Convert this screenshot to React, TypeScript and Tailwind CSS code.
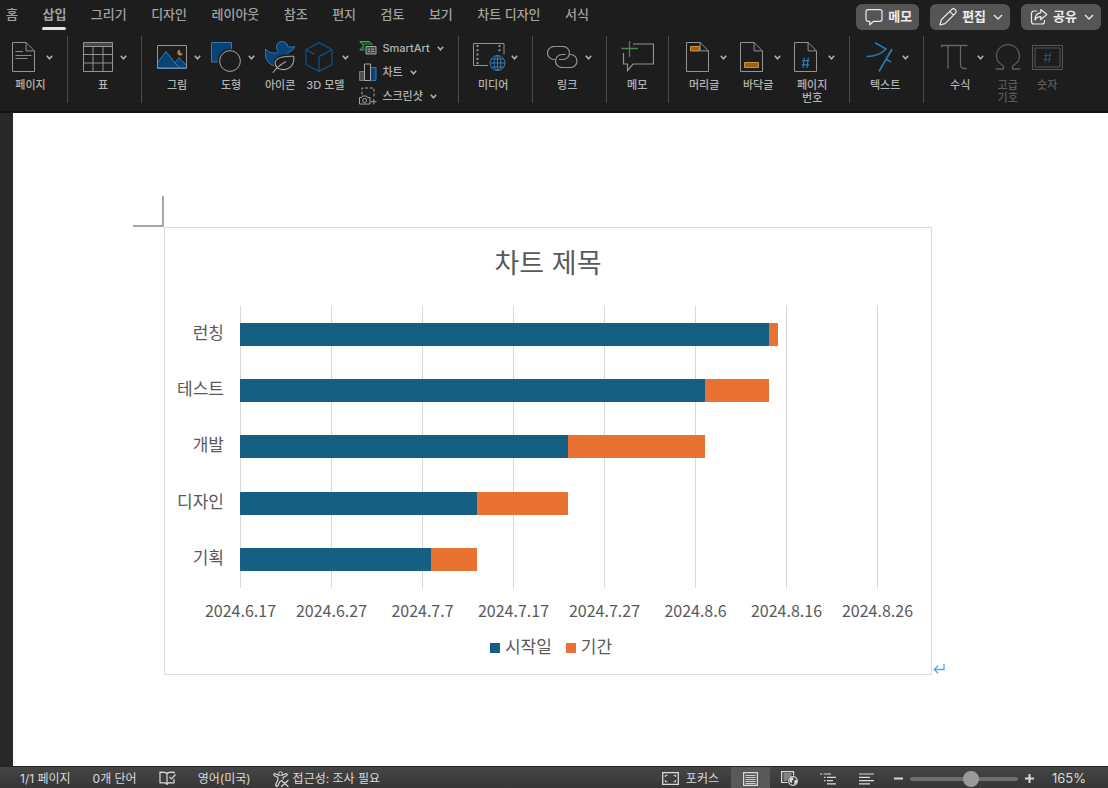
import React, { useState } from "react";
import type { ReactNode } from "react";

const TABS = ["홈", "삽입", "그리기", "디자인", "레이아웃", "참조", "편지", "검토", "보기", "차트 디자인", "서식"];

const TOTAL_DAYS = 70;
const TASKS = [
  { name: "런칭", start: 58, length: 1 },
  { name: "테스트", start: 51, length: 7 },
  { name: "개발", start: 36, length: 15 },
  { name: "디자인", start: 26, length: 10 },
  { name: "기획", start: 21, length: 5 },
];
const TICKS = ["2024.6.17", "2024.6.27", "2024.7.7", "2024.7.17", "2024.7.27", "2024.8.6", "2024.8.16", "2024.8.26"];

function Svg({ w, h, children, className = "" }: { w: number; h: number; children: ReactNode; className?: string }) {
  return (
    <svg width={w} height={h} viewBox={`0 0 ${w} ${h}`} fill="none" stroke="currentColor" aria-hidden="true" className={`shrink-0 ${className}`}>
      {children}
    </svg>
  );
}

function Caret({ className = "" }: { className?: string }) {
  return (
    <Svg w={7} h={5} className={className}>
      <path d="M0.8 0.8 3.5 3.8 6.2 0.8" strokeWidth="1.5" />
    </Svg>
  );
}

function Sheet({ children }: { children: ReactNode }) {
  return (
    <Svg w={23} h={30} className="text-[#949494]">
      <path d="M.5.5h13.6l8.4 8.4v20.6H.5zM14.1.5v8.4h8.4" />
      {children}
    </Svg>
  );
}

function Tool({ icon, label, caret = true, disabled = false, gap = "gap-[7px]" }: { icon: ReactNode; label: ReactNode; caret?: boolean; disabled?: boolean; gap?: string }) {
  return (
    <button type="button" disabled={disabled} className={`flex shrink-0 flex-col items-center gap-[7px] pt-[6px] ${disabled ? "text-[#5c5c5c]" : "text-[#b4b4b4]"}`}>
      <span className={`flex h-[30px] items-center ${gap}`}>
        {icon}
        {caret && <Caret />}
      </span>
      <span className={`text-center text-[11px] leading-[13px] font-medium whitespace-nowrap ${caret ? "pr-1" : ""}`}>{label}</span>
    </button>
  );
}

function SmallTool({ icon, label }: { icon: ReactNode; label: string }) {
  return (
    <button type="button" className="flex h-6 items-center text-[11px] font-medium whitespace-nowrap text-[#b4b4b4]">
      {icon}
      <span className="pr-[7px] pl-[5px]">{label}</span>
      <Caret />
    </button>
  );
}

function Separator() {
  return <div className="h-[67px] w-px shrink-0 bg-[#4a4a4a]" />;
}

function Pill({ icon, label, caret = true }: { icon: ReactNode; label: string; caret?: boolean }) {
  return (
    <button type="button" className="flex h-[26px] items-center rounded-md bg-[#555555] pr-[7px] pl-[9px] text-[13px] font-bold whitespace-nowrap text-[#ececec]">
      {icon}
      <span className="pl-[5px]">{label}</span>
      {caret && (
        <Svg w={10} h={6} className="ml-[7px]">
          <path d="m1 1 4 4 4-4" strokeWidth="1.3" />
        </Svg>
      )}
    </button>
  );
}

function Header() {
  const [active, setActive] = useState("삽입");
  return (
    <header className="border-b-2 border-[#111111] bg-[#1d1d1d]">
      <div className="flex items-start justify-between pr-[7px] pl-[6px]">
        <nav className="flex w-[583px] justify-between pt-1 text-[13px] leading-5 font-medium text-[#a2a2a2]">
          {TABS.map((t) => (
            <button key={t} type="button" onClick={() => setActive(t)} className={`flex flex-col gap-[3px] whitespace-nowrap ${t === active ? "font-bold" : ""}`}>
              {t}
              <span className={`h-[3px] w-full rounded-full ${t === active ? "bg-[#e2e2e2]" : ""}`} />
            </button>
          ))}
        </nav>
        <div className="flex gap-[11px] pt-1 pb-[3px]">
          <Pill
            caret={false}
            label="메모"
            icon={
              <Svg w={18} h={18}>
                <path d="M3 1.7h12a2 2 0 0 1 2 2v7.6a2 2 0 0 1-2 2H8.6L4.8 16.8v-3.5H3a2 2 0 0 1-2-2V3.700a2 2 0 0 1 2-2z" strokeWidth="1.2" strokeLinejoin="round" />
              </Svg>
            }
          />
          <Pill
            label="편집"
            icon={
              <Svg w={18} h={18}>
                <path d="M1 17l1.300-5.200L12.600 1.600a2.400 2.400 0 0 1 3.700 3.700L6 15.600zM10.800 3.400l3.700 3.700" strokeWidth="1.2" strokeLinejoin="round" />
              </Svg>
            }
          />
          <Pill
            label="공유"
            icon={
              <Svg w={18} h={18}>
                <path d="M7 3H4a2.500 2.500 0 0 0-2.500 2.500v8A2.500 2.500 0 0 0 4 16h8a2.500 2.500 0 0 0 2.500-2.500V12" strokeWidth="1.2" />
                <path d="M10.800 1.500 16.800 6.500l-6 5V8.600C8 8.600 6.300 9.500 5 12c.2-4.500 2.500-7 5.800-7.400z" strokeWidth="1.2" strokeLinejoin="round" />
              </Svg>
            }
          />
        </div>
      </div>
      <Ribbon />
    </header>
  );
}

function Ribbon() {
  return (
    <div className="flex items-start overflow-hidden pt-[3px] pb-[3px]">
      <div className="flex pr-[14px] pl-3">
        <Tool
          gap="gap-[11px]"
          label="페이지"
          icon={
            <Sheet>
              <path d="M3.500 9.500h7.500M3.500 13.500h16M3.500 16.500h12" strokeWidth=".9" />
            </Sheet>
          }
        />
      </div>
      <Separator />
      <div className="flex pr-[14px] pl-[15px]">
        <Tool
          label="표"
          icon={
            <Svg w={30} h={30} className="text-[#949494]">
              <path d="M.5.5h29v4H.5z" fill="#484848" />
              <path d="M.5 4.500v25h29v-25M.5 12.500h29M.5 21h29M10 4.500v25M20 4.500v25" />
            </Svg>
          }
        />
      </div>
      <Separator />
      <div className="flex gap-[10px] pr-[14px] pl-[15px]">
        <Tool
          label="그림"
          icon={
            <Svg w={30} h={24} className="text-[#949494]">
              <path d="M.5 17.500 9 6.500 18 18l4-5.500 7.500 8v3H.5z" fill="#0b4379" stroke="#3879b5" />
              <path d="m18 18 5 5.500" stroke="#3879b5" />
              <path d="M.5.500h29v22.500H.5z" />
              <path d="M23 4.500a3 3 0 1 0 3 4.300 3.200 3.200 0 0 1-3-4.300z" fill="#c8802f" stroke="none" />
            </Svg>
          }
        />
        <Tool
          label="도형"
          icon={
            <Svg w={30} h={30} className="text-[#a4a4a4]">
              <path d="M.5.500h20v19.500H.5z" fill="#0b4379" stroke="#3879b5" />
              <circle cx="19" cy="19" r="12.200" fill="#1d1d1d" stroke="none" />
              <circle cx="19" cy="19" r="10.400" />
            </Svg>
          }
        />
        <Tool
          caret={false}
          label="아이콘"
          icon={
            <Svg w={30} h={32} className="text-[#a4a4a4]">
              <path d="M.6 8c1.800 2.200 3.800 3.500 6.600 3.900 2 .3 4 .2 5.300-.5.600-.4.500-.900.200-1.700A5.700 5.700 0 1 1 22.800 5.400c2.200.9 4.200.8 6.700.3-.6 2.600-2.400 4.500-5.500 4.900-.9.400-1.200 1-.9 2l.5 3.400-9 8.500c-2 .700-4.500.500-6.800-.3C2 22.200-.6 16.500.6 8z" fill="#0b4379" stroke="#3879b5" strokeLinejoin="round" />
              <path d="M12.700 27.300c-6.500-7.800.8-12.800 16-12 1 8.500-4.500 16.500-16 12z" fill="#1d1d1d" stroke="#1d1d1d" strokeWidth="4" strokeLinejoin="round" />
              <path d="M8 31.700c3-4.700 7.500-8.200 13-11.200M12.400 27.300c-6.500-7.800.8-12.600 16.300-12 1 8.500-5 16.500-16.300 12" strokeLinejoin="round" strokeWidth="1.100" />
            </Svg>
          }
        />
        <Tool
          gap="gap-[9px]"
          label="3D 모델"
          icon={
            <Svg w={28} h={30} className="text-[#15508d]">
              <path d="M14 .600 27 7.500v15L14 29.400 1 22.500v-15zM1 7.500l8.500 4.600M27 7.500 14 14.700v14.700" strokeWidth="1.200" />
            </Svg>
          }
        />
        <div className="flex flex-col">
          <SmallTool
            label="SmartArt"
            icon={
              <Svg w={18} h={16} className="text-[#a4a4a4]">
                <path d="M.8 1.500h9.700l4 4.300-4 4.200H.8l3.700-4.200z" fill="#17602f" stroke="#4fa263" />
                <path d="M5.500 5h12.500v11H5.500z" fill="#1d1d1d" stroke="none" />
                <path d="M7 6.500h10v7.500H7z" fill="#4a4a4a" />
                <path d="M9 9.200h2M12 9.200h3M9 11.500h2M12 11.500h3" />
              </Svg>
            }
          />
          <SmallTool
            label="차트"
            icon={
              <Svg w={18} h={18} className="text-[#a4a4a4]">
                <path d="M.5 8.500h5v9h-5z" fill="#505050" stroke="#777" />
                <path d="M11.500 4.500h5.500v13h-5.500z" fill="#0b4379" stroke="#3879b5" />
                <path d="M5.500 1h6v16.500h-6z" fill="#1d1d1d" />
              </Svg>
            }
          />
          <SmallTool
            label="스크린샷"
            icon={
              <Svg w={18} h={18} className="text-[#a4a4a4]">
                <path d="M3 7.500V1h12v9.500" strokeDasharray="3 1.800" />
                <path d="M.5 10.500h2l1-1.500h4l1 1.500h2.500v6.500H.500z" />
                <circle cx="5.600" cy="13.400" r="2" />
                <path d="M14.700 12v5.500M12 14.700h5.500" stroke="#4db35f" strokeWidth="1.200" />
              </Svg>
            }
          />
        </div>
      </div>
      <Separator />
      <div className="flex px-[14px]">
        <Tool
          gap="gap-1"
          label="미디어"
          icon={
            <Svg w={34} h={28} className="text-[#949494]">
              <path d="M15 22.500H.5v-22h30.500V11.500" />
              <path d="M4.500 2v20M26.500 2v8" strokeDasharray="2 2.300" strokeWidth="2" />
              <g stroke="#3479b0">
                <circle cx="24.500" cy="20" r="7.500" />
                <ellipse cx="24.500" cy="20" rx="3.500" ry="7.500" />
                <path d="M17 20h15M18.200 16h12.600M18.200 24h12.600M24.500 12.500v15" />
              </g>
            </Svg>
          }
        />
      </div>
      <Separator />
      <div className="flex px-[14px]">
        <Tool
          label="링크"
          icon={
            <Svg w={31} h={22} className="text-[#949494]">
              <path d="M8 13.500H7a6.300 6.300 0 0 1 0-13h9a6.300 6.300 0 0 1 0 13h-4" strokeWidth="1.200" />
              <path d="M18.500 8.500H15a6.300 6.300 0 0 0 0 13h8.500a6.300 6.300 0 0 0 0-13H23" strokeWidth="1.200" />
            </Svg>
          }
        />
      </div>
      <Separator />
      <div className="flex px-[14px]">
        <Tool
          caret={false}
          label="메모"
          icon={
            <Svg w={33} h={32} className="text-[#949494]">
              <path d="M12 3h20.500v20H12L6.500 29.500V23H2.500V12" strokeWidth="1.200" />
              <path d="M8.500 0v16M.5 7.500h16.500" stroke="#43884e" strokeWidth="1.300" />
            </Svg>
          }
        />
      </div>
      <Separator />
      <div className="flex gap-[13px] pr-[14px] pl-[17px]">
        <Tool
          gap="gap-[11px]"
          label="머리글"
          icon={
            <Sheet>
              <path d="M4.500 4.500h9v4.500h-9z" fill="#a15f13" stroke="#c99443" />
            </Sheet>
          }
        />
        <Tool
          gap="gap-[11px]"
          label="바닥글"
          icon={
            <Sheet>
              <path d="M4.500 20.500h14v5h-14z" fill="#a15f13" stroke="#c99443" />
            </Sheet>
          }
        />
        <Tool
          gap="gap-[11px]"
          label={
            <>
              페이지
              <br />
              번호
            </>
          }
          icon={
            <Sheet>
              <path d="m10.300 15.500-1.300 10.500M14.300 15.500 13 26M8 18.700h7.500M7.700 22.800h7.500" stroke="#3479b0" strokeWidth="1.200" />
            </Sheet>
          }
        />
      </div>
      <Separator />
      <div className="flex pr-[14px] pl-4">
        <Tool
          gap="gap-[9px]"
          label="텍스트"
          icon={
            <Svg w={27} h={30} className="text-[#2c78ae]">
              <path d="m9 .800 11 6.200C15 12 9 14.700.500 14.500" strokeWidth="1.600" />
              <path d="M26 7 13 29.500M19.500 17l5.500 3" strokeWidth="1.800" />
            </Svg>
          }
        />
      </div>
      <Separator />
      <div className="flex gap-[11px] pl-[17px]">
        <Tool
          gap="gap-[9px]"
          label="수식"
          icon={
            <Svg w={27} h={26} className="text-[#666666]">
              <path d="M.5 3.500V1.500h26M7 1.500v23M19.500 1.500V20c0 3 1.500 4.500 3.500 4.500h2.500" strokeWidth="1.300" />
            </Svg>
          }
        />
        <Tool
          caret={false}
          disabled
          label={
            <>
              고급
              <br />
              기호
            </>
          }
          icon={
            <Svg w={26} h={26} className="text-[#595959]">
              <path d="M.5 25h8v-3C4 19.500 1.500 16.500 1.500 12a11.500 11.500 0 0 1 23 0c0 4.500-2.500 7.500-7 10v3h8" strokeWidth="1.300" />
            </Svg>
          }
        />
        <Tool
          caret={false}
          disabled
          label="숫자"
          icon={
            <Svg w={31} h={25} className="text-[#555555]">
              <path d="M.5.500h30v24H.5zM3 3h25v19H3z" />
              <path d="m14.300 7.500-1.300 10M18.300 7.500 17 17.500M11.800 10.500h7.500M11.500 14.500h7.500" stroke="#27506f" strokeWidth="1.200" />
            </Svg>
          }
        />
      </div>
    </div>
  );
}

function GanttChart() {
  return (
    <figure className="flex flex-col border border-[#dcdcdc] bg-white pb-[15px] text-[#595959]">
      <figcaption className="pt-4 text-center text-[27px] leading-10">차트 제목</figcaption>
      <div className="grid grid-cols-[75px_1fr] pt-[22px] pr-[53px]">
        <div className="grid grid-rows-5 pr-4 text-right text-[17px] leading-6">
          {TASKS.map((t) => (
            <div key={t.name} className="flex items-center justify-end pb-[3px]">
              {t.name}
            </div>
          ))}
        </div>
        <div className="grid">
          <div className="col-start-1 row-start-1 flex justify-between">
            {TICKS.map((t) => (
              <div key={t} className="w-px bg-[#d9d9d9]" />
            ))}
          </div>
          <div className="col-start-1 row-start-1 grid h-[282px] grid-rows-5">
            {TASKS.map((t) => (
              <div key={t.name} className="flex items-center">
                <div className="h-[23px] bg-[#156082]" style={{ width: `${(t.start / TOTAL_DAYS) * 100}%` }} />
                <div className="h-[23px] bg-[#e97132]" style={{ width: `${(t.length / TOTAL_DAYS) * 100}%` }} />
              </div>
            ))}
          </div>
        </div>
        <div className="col-start-2 flex justify-between pt-[10px] pb-[2px] font-['Noto_Sans_CJK_KR',sans-serif] text-[16px] leading-6">
          {TICKS.map((t) => (
            <div key={t} className="flex w-px justify-center whitespace-nowrap">
              <span>{t}</span>
            </div>
          ))}
        </div>
      </div>
      <div className="flex justify-center gap-[14px] pt-[11px] pl-[6px] text-[17px] leading-6">
        <div className="flex items-center gap-[5px]">
          <span className="mt-[2px] size-[10px] bg-[#156082]" />
          시작일
        </div>
        <div className="flex items-center gap-[5px]">
          <span className="mt-[2px] size-[10px] bg-[#e97132]" />
          기간
        </div>
      </div>
    </figure>
  );
}

function StatusBar() {
  const [zoom, setZoom] = useState(58);
  return (
    <footer className="flex h-[22px] items-stretch justify-between border-t border-[#262626] bg-linear-to-b from-[#454545] to-[#373737] text-[12px] whitespace-nowrap text-[#dadada]">
      <div className="flex items-center gap-[22px] pt-[2px] pl-5">
        <span>1/1 페이지</span>
        <span>0개 단어</span>
        <button type="button" aria-label="맞춤법 검사">
          <Svg w={17} h={15}>
            <path d="M8 2.500C6.500 1.200 4 1.200 1 1.200v10.600h5.500L8 13.300l1.500-1.500H15V8M8 2.500v10.800M8 2.500c1-1 2.500-1.300 7-1.300v1.300M10.500 6l2 2 4-4.500" strokeWidth="1.200" />
          </Svg>
        </button>
        <button type="button">영어(미국)</button>
        <button type="button" className="flex items-center gap-1">
          <Svg w={16} h={16}>
            <circle cx="7.500" cy="2.600" r="1.900" />
            <path d="M5.800 4.300 2.500 2.800C1 2.200.2 4 1.500 4.700L4.800 6.300v2.900L2.700 13.800c-.4 1.500 1.400 2.200 2.100.9L7.300 10M9.200 4.300l3.300-1.500c1.500-.6 2.300 1.200 1 1.900L10.200 6.300v1.700M8.500 9.500l6.500 6M15 9.500l-6.500 6" strokeWidth="1.200" strokeLinecap="round" />
          </Svg>
          접근성: 조사 필요
        </button>
      </div>
      <div className="flex items-stretch pr-[22px]">
        <button type="button" className="flex items-center gap-[7px] pt-[2px] pr-3">
          <Svg w={17} h={13}>
            <path d="M.700.700h15.600v11.600H.7z" strokeWidth="1.300" />
            <path d="M3.300 5V3.300H5.500M11.500 3.300h2.200V5M13.700 8v1.700h-2.200M5.500 9.700H3.300V8" />
          </Svg>
          포커스
        </button>
        <button type="button" aria-label="인쇄 모양" className="flex w-[39px] items-center justify-center bg-[#595959] pt-[2px]">
          <Svg w={15} h={14}>
            <path d="M.6.600h13.800v12.800H.6z" strokeWidth="1.200" />
            <path d="M2.500 3.500h10M2.500 5.500h10M2.500 7.500h10M2.500 9.500h10M2.500 11.500h10" strokeWidth=".9" />
          </Svg>
        </button>
        <button type="button" aria-label="웹 모양" className="flex w-[39px] items-center justify-center pt-[2px]">
          <Svg w={17} h={15}>
            <path d="M6.500 11.500H.6V.600h12v4" strokeWidth="1.200" />
            <path d="M2.500 3h8M2.500 5h8M2.500 7h5M2.500 9h4" strokeWidth=".9" />
            <circle cx="12" cy="10" r="4.300" fill="#3c3c3c" strokeWidth="1.200" />
            <path d="M9 7c2-1 3.500-.5 3.500 1s-2 1-1.500 2.500-1 2-1.700.5C8.500 10 8.300 8.500 9 7zM13.300 9.500l2.700-.700c.3 2.200-.700 3.900-2.700 4.700z" fill="currentColor" stroke="none" />
          </Svg>
        </button>
        <button type="button" aria-label="개요" className="flex w-[39px] items-center justify-center pt-[2px]">
          <Svg w={16} h={12}>
            <path d="M0 1h2M3.500 1H11M4 4.300h1.500M7 4.300h9M4 7.600h1.500M7 7.600h6M7 10.900h9" strokeWidth="1.200" />
          </Svg>
        </button>
        <button type="button" aria-label="초안" className="flex w-[37px] items-center justify-center pt-[2px]">
          <Svg w={15} h={12}>
            <path d="M0 1h15M0 4.300h11M0 7.600h15M0 10.900h11" strokeWidth="1.200" />
          </Svg>
        </button>
        <div className="flex items-center gap-[7px] pt-[2px] pl-[9px]">
          <button type="button" aria-label="축소">
            <Svg w={9} h={9}>
              <path d="M0 4.500h9" strokeWidth="2" />
            </Svg>
          </button>
          <input
            type="range"
            aria-label="확대/축소"
            min={0}
            max={100}
            value={zoom}
            onChange={(e) => setZoom(Number(e.target.value))}
            className="h-4 w-[108px] appearance-none bg-transparent [&::-webkit-slider-runnable-track]:h-1 [&::-webkit-slider-runnable-track]:rounded-full [&::-webkit-slider-runnable-track]:bg-[#6d6d6d] [&::-webkit-slider-thumb]:-mt-[6px] [&::-webkit-slider-thumb]:size-4 [&::-webkit-slider-thumb]:appearance-none [&::-webkit-slider-thumb]:rounded-full [&::-webkit-slider-thumb]:bg-[#9b9b9b]"
          />
          <button type="button" aria-label="확대">
            <Svg w={9} h={9}>
              <path d="M0 4.500h9M4.500 0v9" strokeWidth="2" />
            </Svg>
          </button>
          <span className="pl-[11px] text-[13px]">165%</span>
        </div>
      </div>
    </footer>
  );
}

export default function App() {
  return (
    <div className="flex min-h-screen flex-col bg-[#282828] font-[Inter,'Noto_Sans_CJK_KR',sans-serif]">
      <Header />
      <main className="flex flex-1 flex-col pl-[13px]">
        <div className="grid flex-1 grid-cols-[31px_1fr_14px] grid-rows-[31px_auto] content-start bg-white pt-[83px] pr-[162px] pb-16 pl-[120px]">
          <div className="border-r-2 border-b-2 border-[#a6a6a6]" />
          <div className="col-start-2 row-start-2">
            <GanttChart />
          </div>
          <div className="col-start-3 row-start-2 self-end pl-[1px] text-[#4ea6f5]">
            <Svg w={12} h={12}>
              <path d="M11 1v5.500H1.500M5 2.800 1.300 6.500 5 10.200" strokeWidth="1.300" />
            </Svg>
          </div>
        </div>
      </main>
      <StatusBar />
    </div>
  );
}
